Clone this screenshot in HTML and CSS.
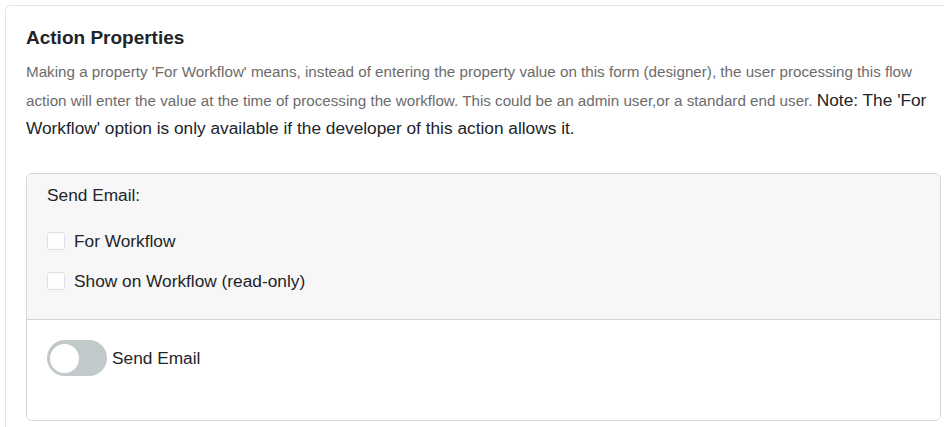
FILE: index.html
```html
<!DOCTYPE html>
<html lang="en">
<head>
<meta charset="utf-8">
<title>Action Properties</title>
<link rel="stylesheet" href="styles.css">
</head>
<body>
<div class="card">
  <h2 class="title">Action Properties</h2>
  <p class="desc">Making a property 'For Workflow' means, instead of entering the property value on this form (designer), the user processing this flow action will enter the value at the time of processing the workflow. This could be an admin user,or a standard end user. <span class="note">Note: The 'For Workflow' option is only available if the developer of this action allows it.</span></p>
  <div class="prop">
    <div class="prop-head">
      <div class="prop-label">Send Email:</div>
      <label class="check-row"><span class="check"></span>For Workflow</label>
      <label class="check-row"><span class="check"></span>Show on Workflow (read-only)</label>
    </div>
    <div class="prop-body">
      <div class="toggle-row"><span class="toggle"><span class="knob"></span></span>Send Email</div>
    </div>
  </div>
</div>
</body>
</html>
```

FILE: styles.css
```css
html { overflow: hidden; }
body {
  margin: 5px;
  font-family: "Liberation Sans", Arial, sans-serif;
  color: #212529;
  background: #fff;
}
.card {
  width: 957px;
  box-sizing: border-box;
  border: 1px solid #e4e4e4;
  border-radius: 6px;
  padding: 20px 20px 30px;
  background: #fff;
}
.title {
  margin: 0 0 9px;
  font-size: 19px;
  line-height: 23px;
  font-weight: bold;
  color: #212529;
}
.desc {
  margin: 0 0 29.5px;
  font-size: 15.2px;
  line-height: 28.5px;
  color: #6c6c6c;
}
.note {
  font-size: 17.3px;
  line-height: 1;
  color: #212529;
}
.prop {
  border: 1px solid #d4d4d4;
  border-radius: 6px;
  overflow: hidden;
}
.prop-head {
  background: #f7f7f7;
  padding: 9px 20px 26px;
  border-bottom: 1px solid #d4d4d4;
  display: flex;
  flex-direction: column;
  gap: 16px;
}
.prop-label {
  font-size: 17.3px;
  line-height: 24px;
  margin-bottom: 6px;
}
.check-row {
  display: flex;
  align-items: center;
  gap: 9px;
  font-size: 17.3px;
  line-height: 24px;
}
.check {
  flex: none;
  width: 18px;
  height: 18px;
  box-sizing: border-box;
  border: 1px solid #dedee6;
  border-radius: 3px;
  background: #fff;
}
.prop-body {
  background: #fff;
  padding: 20px 20px 44px;
}
.toggle-row {
  display: flex;
  align-items: center;
  gap: 5px;
  font-size: 17.3px;
  line-height: 24px;
}
.toggle {
  flex: none;
  width: 60px;
  height: 36px;
  border-radius: 18px;
  background: #c2c9cb;
  display: flex;
  align-items: center;
  padding-left: 3px;
  box-sizing: border-box;
}
.knob {
  width: 29px;
  height: 29px;
  border-radius: 50%;
  background: #fff;
}
```
